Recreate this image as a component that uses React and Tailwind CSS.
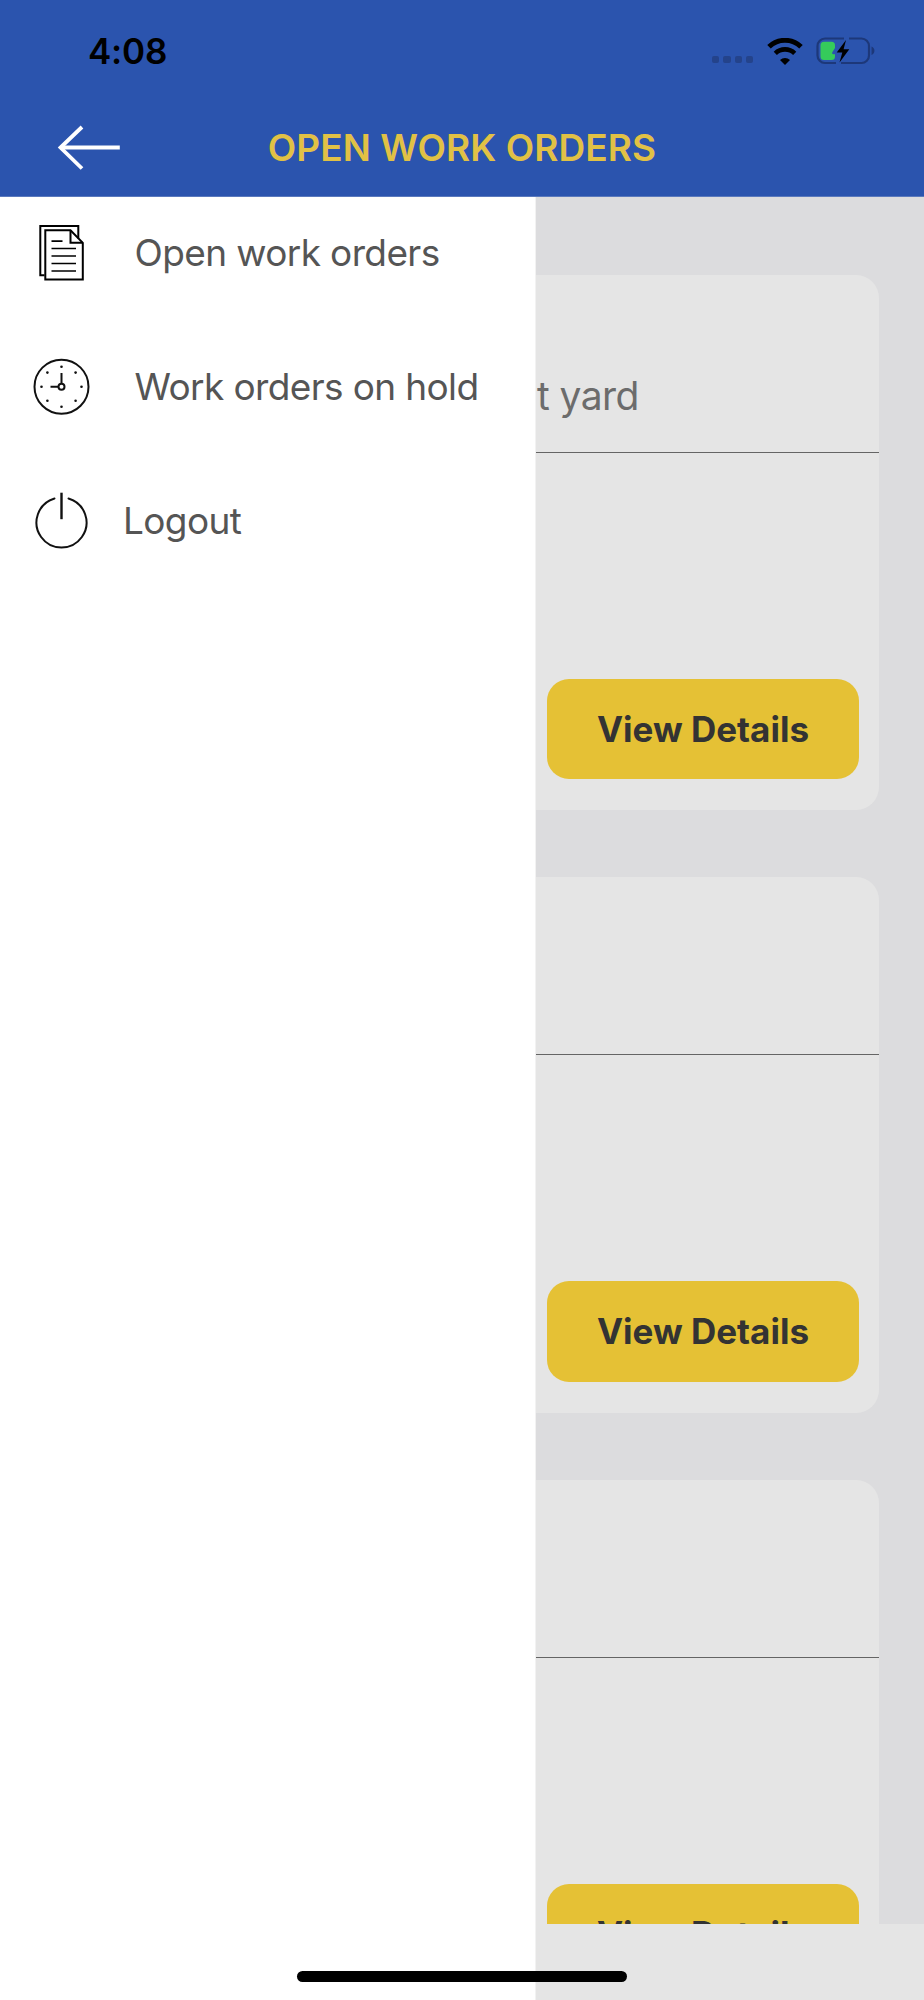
import { useState } from 'react';
import clsx from 'clsx';

const menuItems = [
  { id: 'open', label: 'Open work orders', icon: DocumentIcon, labelClass: 'ml-[41.5px]' },
  { id: 'hold', label: 'Work orders on hold', icon: ClockIcon, labelClass: 'ml-[41.5px]' },
  { id: 'logout', label: 'Logout', icon: PowerIcon, labelClass: 'ml-[30px]' },
];

const workOrders = [
  { id: 1, title: 't yard' },
  { id: 2, title: '' },
  { id: 3, title: '' },
];

function DocumentIcon() {
  return (
    <svg width="64" height="64" viewBox="0 0 64 64" fill="none" stroke="#000" strokeWidth="2">
      <path d="M15.5 54.3h-4.2V4.9h38v12.5" />
      <path d="M41.5 9.3H16.3v49.3h37.5V21.8z" />
      <path d="M41.5 9.3v12.5h12.3" />
      <path d="M22.5 20.2h11M22.5 27.5h24.5M22.5 35h24.5M22.5 42.5h24.5M22.5 50h24.5" strokeWidth="1.7" />
    </svg>
  );
}

function ClockIcon() {
  const dots = [
    [32.5, 11.7], [46.6, 17.6], [52.5, 31.7], [46.6, 45.8],
    [32.5, 51.7], [18.4, 45.8], [12.5, 31.7], [18.4, 17.6],
  ];

  return (
    <svg width="64" height="64" viewBox="0 0 64 64" fill="none" stroke="#111" strokeWidth="2">
      <circle cx="32.5" cy="31.7" r="27" />
      <circle cx="32.5" cy="31.7" r="3" />
      <path d="M32.5 18v10.7M21.5 31.7h8" />
      {dots.map(([x, y]) => (
        <circle key={`${x}-${y}`} cx={x} cy={y} r="1.3" fill="#111" stroke="none" />
      ))}
    </svg>
  );
}

function PowerIcon() {
  return (
    <svg width="64" height="64" viewBox="0 0 64 64" fill="none" stroke="#111" strokeWidth="2" strokeLinecap="round">
      <path d="M25.5 9.5a25 25 0 1 0 14 0" />
      <path d="M32.5 3.7v26.5" strokeLinecap="butt" strokeWidth="2.4" />
    </svg>
  );
}

function StatusBar() {
  return (
    <div className="flex h-[100px] items-center justify-between pt-[2px] pl-[88px] pr-[48px]">
      <span className="text-[35px] leading-none font-semibold tracking-[-0.2px] text-black">4:08</span>
      <div className="flex items-center">
        {/* no signal */}
        <div className="mr-[14px] mt-[17px] flex gap-1">
          {[0, 1, 2, 3].map((i) => (
            <span key={i} className="h-[7.4px] w-[7.2px] rounded-[2px] bg-[#24438b]" />
          ))}
        </div>
        <svg className="mr-[13px]" width="36" height="27" viewBox="0 0 36 27" fill="none">
          <path d="M2 8.8a23 23 0 0 1 32 0" stroke="#000" strokeWidth="5" />
          <path d="M8.3 15.3a14 14 0 0 1 19.4 0" stroke="#000" strokeWidth="4.6" />
          <path d="M18 27l-5-5a7.3 7.3 0 0 1 10 0z" fill="#000" />
        </svg>
        <svg width="60" height="28" viewBox="0 0 60 28" fill="none">
          <path d="M28 1.5H9a7.5 7.5 0 0 0-7.5 7.5v9.5a7.5 7.5 0 0 0 7.5 7.5h11M33 1.5h12.5a7.5 7.5 0 0 1 7.5 7.5v9.5a7.5 7.5 0 0 1-7.5 7.5H25" stroke="#1d387a" strokeWidth="2.2" />
          <path d="M55.5 9.5c2 .8 2.9 2.3 2.9 4.2s-.9 3.4-2.9 4.2z" fill="#1d387a" />
          <path d="M8 4.7h7.500a3.500 3.500 0 0 1 3.500 3.500V11l-2.700 4.300c-.5 1 0 1.900 1 1.900h1.700v2.300a3.500 3.500 0 0 1-3.500 3.500H8a3.500 3.500 0 0 1-3.500-3.500V8.200A3.500 3.500 0 0 1 8 4.700z" fill="#35cb5b" />
          <path d="M30 3L20.7 15.4h5.6L23.5 25.500 33.300 12.200h-5.700z" fill="#000" />
        </svg>
      </div>
    </div>
  );
}

function Header() {
  return (
    <header className="h-[197px] shrink-0 border-b border-[#5a79bd] bg-[#2b54ae]">
      <StatusBar />
      <div className="grid h-[96px] grid-cols-[200px_1fr_200px] items-center">
        <button className="ml-[56px] w-[68px]" aria-label="Back">
          <svg width="68" height="48" viewBox="0 0 68 48" fill="none" stroke="#fff" strokeWidth="3.8">
            <path d="M26 3L4.5 23.5 26 44.5" />
            <path d="M4.5 23.5H63.8" />
          </svg>
        </button>
        <h1 className="pb-[1px] text-center text-[37px] leading-none font-[560] tracking-[0.08px] whitespace-nowrap text-[#e1c145]">
          OPEN WORK ORDERS
        </h1>
      </div>
    </header>
  );
}

function WorkOrderCard({ title }) {
  return (
    <article className="flex h-[535.6px] shrink-0 flex-col rounded-r-[23px] bg-[#e5e5e5]">
      <div className="flex h-[178.4px] items-end border-b border-[#656565] pb-[33px]">
        <p className="ml-px text-[39px] leading-[47px] tracking-[-0.6px] text-[#6c6c6c]">{title}</p>
      </div>
      <div className="flex flex-1 items-end justify-end pr-5 pb-[31.2px]">
        <button className="h-[100.3px] w-[312px] rounded-[22px] bg-[#e5c135] text-[35px] font-bold text-[#333]">
          View Details
        </button>
      </div>
    </article>
  );
}

export default function App() {
  const [active, setActive] = useState('open');

  return (
    <div className="relative flex h-[2000px] w-[924px] flex-col overflow-hidden bg-[#e5e5e5] font-['Inter',sans-serif]">
      <Header />

      <div className="flex min-h-0 flex-1">
        <aside className="w-[536px] shrink-0 border-r border-[#f2f2f2] bg-white pl-[29px]">
          <nav className="flex flex-col gap-[22px]">
            {menuItems.map(({ id, label, icon: Icon, labelClass }) => (
              <button
                key={id}
                onClick={() => setActive(id)}
                aria-current={active === id}
                className="flex h-[112px] items-center text-left"
              >
                <Icon />
                <span className={clsx('pb-[2px] text-[37px] leading-none tracking-[-0.62px] whitespace-nowrap text-[#555]', labelClass)}>
                  {label}
                </span>
              </button>
            ))}
          </nav>
        </aside>

        <main className="mb-[76px] flex flex-1 flex-col gap-[67px] overflow-hidden bg-[#dcdcde] pt-[77.5px] pr-[45px]">
          {workOrders.map((order) => (
            <WorkOrderCard key={order.id} title={order.title} />
          ))}
        </main>
      </div>

      {/* home indicator */}
      <div className="absolute top-[1971px] left-[297px] h-[11px] w-[330px] rounded-full bg-black" />
    </div>
  );
}
